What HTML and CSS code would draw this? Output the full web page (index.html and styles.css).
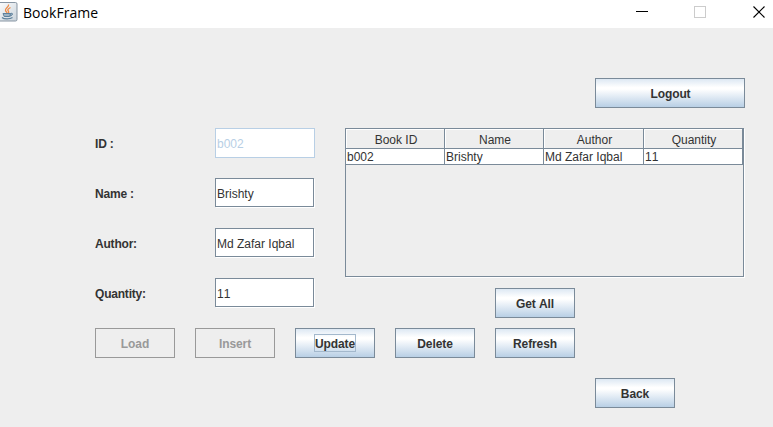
FILE: index.html
```html
<!DOCTYPE html>
<html lang="en">
<head>
<meta charset="utf-8">
<title>BookFrame</title>
<link rel="stylesheet" href="styles.css">
</head>
<body>
<header class="titlebar">
  <svg class="app-icon" width="18" height="20" viewBox="0 0 18 20">
    <defs><linearGradient id="tile" x1="0" y1="0" x2="1" y2="1"><stop offset="0" stop-color="#fff"/><stop offset="1" stop-color="#c9d2da"/></linearGradient></defs>
    <rect x="-2.5" y=".5" width="19.5" height="18.5" rx="1.5" fill="url(#tile)" stroke="#8795a3"/>
    <path d="M8.5 2.5C9.5 5 4.800 6 5.500 8.500C5.800 9.600 7 10 7 11M10.500 5.500C7.500 7 7.300 8 8.500 9.300C9 10 8.700 10.500 8.300 11" fill="none" stroke="#ef8a45" stroke-width="1.300"/>
    <path d="M3 11.500H10.500L9.700 14.500H4.200ZM10.500 11.500C13.500 10.500 13 13.500 10 14" fill="#9db3c4" stroke="#5d809b" stroke-width="1"/>
    <path d="M2 15.500C4 17.300 10 17.300 12.500 15.500" fill="none" stroke="#5d809b" stroke-width="1.300"/>
  </svg>
  <h1 class="title">BookFrame</h1>
  <svg class="controls" width="137" height="28" viewBox="0 0 137 28" fill="none" shape-rendering="crispEdges">
    <path d="M0 11.500H12" stroke="#000"/>
    <rect x="58.500" y="6.500" width="11" height="11" stroke="#ccc"/>
    <path d="M117.500 6.500L128.500 17.500M128.500 6.500L117.500 17.500" stroke="#000" stroke-width="1.100" shape-rendering="auto"/>
  </svg>
</header>
<main class="content">
  <button class="btn logout">Logout</button>
  <div class="main">
    <form class="form">
      <label class="row"><span>ID :</span><input class="field disabled" value="b002" disabled></label>
      <label class="row"><span>Name :</span><input class="field" value="Brishty"></label>
      <label class="row"><span>Author:</span><input class="field" value="Md Zafar Iqbal"></label>
      <label class="row"><span>Quantity:</span><input class="field" value="11"></label>
    </form>
    <section class="records">
      <div class="scrollpane">
        <div class="cells head"><span>Book ID</span><span>Name</span><span>Author</span><span>Quantity</span></div>
        <div class="cells data"><span>b002</span><span>Brishty</span><span>Md Zafar Iqbal</span><span>11</span></div>
      </div>
      <button class="btn getall">Get All</button>
    </section>
  </div>
  <div class="actions">
    <button class="btn" disabled>Load</button>
    <button class="btn" disabled>Insert</button>
    <button class="btn focused"><span>Update</span></button>
    <button class="btn">Delete</button>
    <button class="btn">Refresh</button>
  </div>
  <button class="btn back">Back</button>
</main>
</body>
</html>
```
FILE: styles.css
```css
* { box-sizing: border-box; }
body {
  margin: 0;
  height: 427px;
  overflow: hidden;
  background: #eee;
  color: #333;
  font: 12px/14px "Liberation Sans", Arial, sans-serif;
  font-kerning: none;
}
.titlebar {
  display: flex;
  height: 28px;
  background: #fff;
}
.app-icon { margin-top: 2px; }
.title {
  margin: 0 auto 0 5px;
  color: #000;
  font: 14px/26px "Open Sans", "Noto Sans", sans-serif;
  letter-spacing: .05px;
}
.content {
  display: flex;
  flex-direction: column;
  height: 399px;
  padding: 50px 28px 0 95px;
}
.btn {
  display: flex;
  align-items: center;
  justify-content: center;
  width: 80px;
  height: 30px;
  padding: 1px 0 0;
  border: 1px solid #7a8a99;
  border-radius: 0;
  background: linear-gradient(#dde8f3 0%, #fff 30%, #fff 36%, #b8cfe5 100%);
  color: #333;
  font: bold 12px/14px "Liberation Sans", Arial, sans-serif;
  font-kerning: none;
  letter-spacing: -.1px;
}
.btn:disabled { border-color: #999; background: #eee; color: #999; }
.focused span {
  height: 16px;
  margin-bottom: 1px;
  padding-top: 2px;
  outline: 1px solid #a3b8cc;
}
.logout { align-self: flex-end; width: 150px; padding-left: 1px; }
.main { display: flex; gap: 30px; margin-top: 20px; }
.form { display: flex; flex-direction: column; gap: 20px; width: 220px; }
.row {
  display: flex;
  align-items: center;
  justify-content: space-between;
  height: 30px;
  font-weight: bold;
  letter-spacing: -.2px;
}
.row span { padding-top: 1px; }
.field {
  width: 99px;
  height: 29px;
  margin: 0 1px 1px 0;
  padding: 3px 1px 0;
  border: 1px solid #7a8a99;
  border-radius: 0;
  outline: 0;
  background: #fff;
  box-shadow: 1px 1px #fff;
  color: #333;
  font: 12px/14px "Liberation Sans", Arial, sans-serif;
  font-kerning: none;
}
.field.disabled {
  width: 100px;
  height: 30px;
  margin: 0;
  padding-top: 2px;
  border-color: #b8cfe5;
  box-shadow: none;
  color: #b8cfe5;
}
.records { width: 400px; }
.scrollpane {
  width: 399px;
  height: 149px;
  border: 1px solid #7a8a99;
  box-shadow: 1px 1px #fff;
}
.cells {
  display: grid;
  grid-template-columns: 99px 99px 100px 99px;
}
.cells span {
  border-right: 1px solid #7a8a99;
  border-bottom: 1px solid #7a8a99;
  white-space: nowrap;
}
.head span {
  height: 20px;
  padding: 4px 0 0 2px;
  box-shadow: inset 1px 1px #fff;
  text-align: center;
}
.data span {
  height: 16px;
  padding: 1px 0 0 1px;
  background: #fff;
}
.getall { margin: 11px 0 0 150px; }
.actions { display: flex; gap: 20px; margin-top: 10px; }
.back { margin: 20px 0 0 500px; }
```
